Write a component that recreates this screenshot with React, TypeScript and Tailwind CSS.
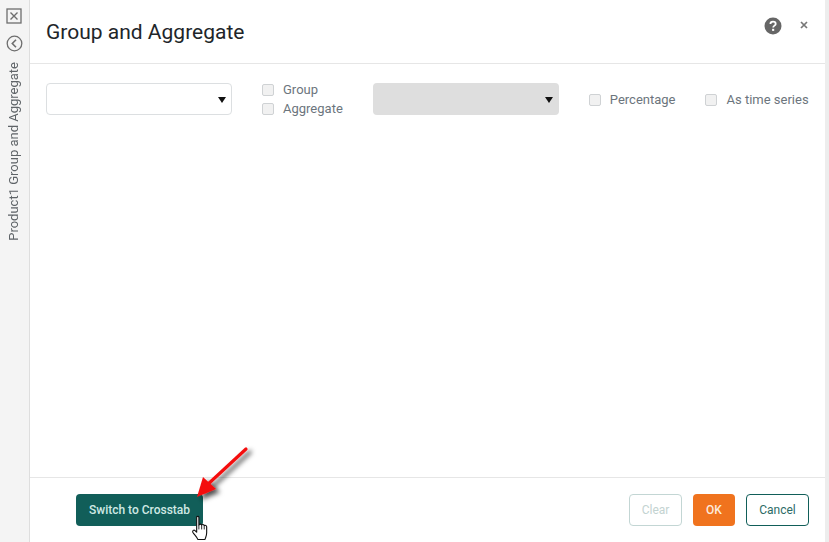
function Check({ label, className = "" }: { label: string; className?: string }) {
  return (
    <label className={`flex items-center gap-[9px] shrink-0 whitespace-nowrap ${className}`}>
      <span className="w-[12px] h-[12px] rounded-[2px] border border-[#cfd2d4] bg-[#f1f1f1]"></span>
      <span className="text-[13px] leading-[19px] text-[#6c757d]">{label}</span>
    </label>
  );
}

function Caret({ className = "" }: { className?: string }) {
  return (
    <svg width="8" height="6" viewBox="0 0 8 6" className={`absolute ${className}`}>
      <path d="M0 0H8L4 6Z" fill="#111" />
    </svg>
  );
}

export default function App() {
  return (
    <div className="w-[829px] h-[542px] flex overflow-hidden bg-white font-['Roboto',sans-serif] text-[#212529]">
      {/* side strip */}
      <div className="w-[30px] shrink-0 bg-[#f4f4f4] border-r border-[#dedede] flex flex-col items-center pt-[8px]">
        <svg width="16" height="16" viewBox="0 0 16 16" className="ml-[-1px]">
          <rect x="1" y="1" width="14" height="14" fill="none" stroke="#6e6e6e" strokeWidth="1.3" />
          <path d="M4.5 4.5L11.5 11.5M11.5 4.5L4.5 11.5" stroke="#6e6e6e" strokeWidth="1.4" />
        </svg>
        <svg width="17" height="17" viewBox="0 0 17 17" className="mt-[11px] ml-[-1px]">
          <circle cx="8.5" cy="8.5" r="7.3" fill="none" stroke="#6e6e6e" strokeWidth="1.3" />
          <path d="M10 4.8L6.3 8.5L10 12.2" fill="none" stroke="#6e6e6e" strokeWidth="1.6" />
        </svg>
        <div className="mt-[10px] [writing-mode:vertical-rl] rotate-180 text-[13px] leading-[14px] text-[#5f6468] whitespace-nowrap ml-[-1px]">
          Product1 Group and Aggregate
        </div>
      </div>

      {/* dialog */}
      <div className="flex-1 flex flex-col min-w-0">
        <div className="h-[64px] shrink-0 border-b border-[#e6e6e6] flex items-start pl-[16px] pr-[17px]">
          <h1 className="mt-[18px] text-[21px] leading-[28px] font-normal text-[#212529]">Group and Aggregate</h1>
          <div className="ml-auto flex items-center gap-[18px] mt-[17px]">
            <svg width="18" height="18" viewBox="0 0 18 18">
              <circle cx="9" cy="9" r="8.5" fill="#666" />
              <path d="M6.4 7C6.4 5.5 7.5 4.6 9 4.6C10.6 4.6 11.7 5.5 11.7 6.9C11.7 8.6 9.2 8.7 9.2 10.5" fill="none" stroke="#fff" strokeWidth="1.8" />
              <rect x="8.1" y="11.8" width="2.1" height="2.1" fill="#fff" />
            </svg>
            <svg width="8" height="8" viewBox="0 0 8 8" className="mb-[2px]">
              <path d="M1 1L7 7M7 1L1 7" stroke="#777" strokeWidth="1.7" />
            </svg>
          </div>
        </div>

        <div className="flex-1 pt-[16px] pl-[16px]">
          <div className="flex items-start">
            <div className="relative w-[186px] h-[32px] shrink-0 mt-[3px] rounded-[4px] border border-[#dcdfe1] bg-white">
              <Caret className="right-[5px] top-[13px]" />
            </div>
            <div className="ml-[30px] flex flex-col shrink-0">
              <Check label="Group" />
              <Check label="Aggregate" />
            </div>
            <div className="relative w-[186px] h-[32px] shrink-0 mt-[3px] ml-[30px] rounded-[4px] bg-[#dedede]">
              <Caret className="right-[6px] top-[14px]" />
            </div>
            <Check label="Percentage" className="ml-[30px] mt-[10px]" />
            <Check label="As time series" className="ml-[30px] mt-[10px]" />
          </div>
        </div>

        <div className="h-[65px] shrink-0 border-t border-[#e6e6e6] flex items-start pt-[16px] pl-[46px] pr-[16px] relative">
          <button className="w-[127px] h-[32px] rounded-[4px] bg-[#115e59] text-[#cfe9e4] text-[12px] font-medium">
            Switch to Crosstab
          </button>
          <div className="ml-auto flex gap-[11px]">
            <button className="w-[53px] h-[32px] rounded-[4px] border border-[#c3d6d4] bg-white text-[#c3d3d1] text-[12px]">Clear</button>
            <button className="w-[42px] h-[32px] rounded-[4px] bg-[#f0731e] text-[#fdeadb] text-[12px] font-medium">OK</button>
            <button className="w-[63px] h-[32px] rounded-[4px] border border-[#115e59] bg-white text-[#2c6b66] text-[12px]">Cancel</button>
          </div>
        </div>
      </div>
      <div className="w-[4px] shrink-0 bg-[#ededed]"></div>

      {/* annotation arrow */}
      <svg width="70" height="60" viewBox="0 0 70 60" className="absolute left-[190px] top-[445px] overflow-visible">
        <defs>
          <filter id="arrowShadow" x="-30%" y="-30%" width="170%" height="170%">
            <feDropShadow dx="4" dy="3" stdDeviation="2.5" floodColor="#000" floodOpacity="0.7" />
          </filter>
        </defs>
        <g filter="url(#arrowShadow)">
          <path d="M56 4L16 41" stroke="#f40f0f" strokeWidth="3.2" strokeLinecap="round" />
          <path d="M7 52L13 32L26 44Z" fill="#f40f0f" />
        </g>
      </svg>

      {/* hand cursor */}
      <svg width="18" height="25" viewBox="0 0 15 22.5" className="absolute left-[191px] top-[515px]">
        <path
          d="M4.5 2C4.5 1 6.5 1 6.5 2V9C7 8 8.5 8 9 9C9.5 8.3 11 8.4 11.3 9.5C12 9 13.5 9.3 13.5 10.5V16C13.5 19 12.5 20 12 22H5.5C5 20 2.5 18 1 15.5C0.5 14 2 13 3 14L4.5 15.5Z"
          fill="#fff"
          stroke="#111"
          strokeWidth="1"
          strokeLinejoin="round"
        />
        <path d="M6.5 9V13M9 9V13M11.3 9.5V13" stroke="#111" strokeWidth="0.8" />
      </svg>
    </div>
  );
}
